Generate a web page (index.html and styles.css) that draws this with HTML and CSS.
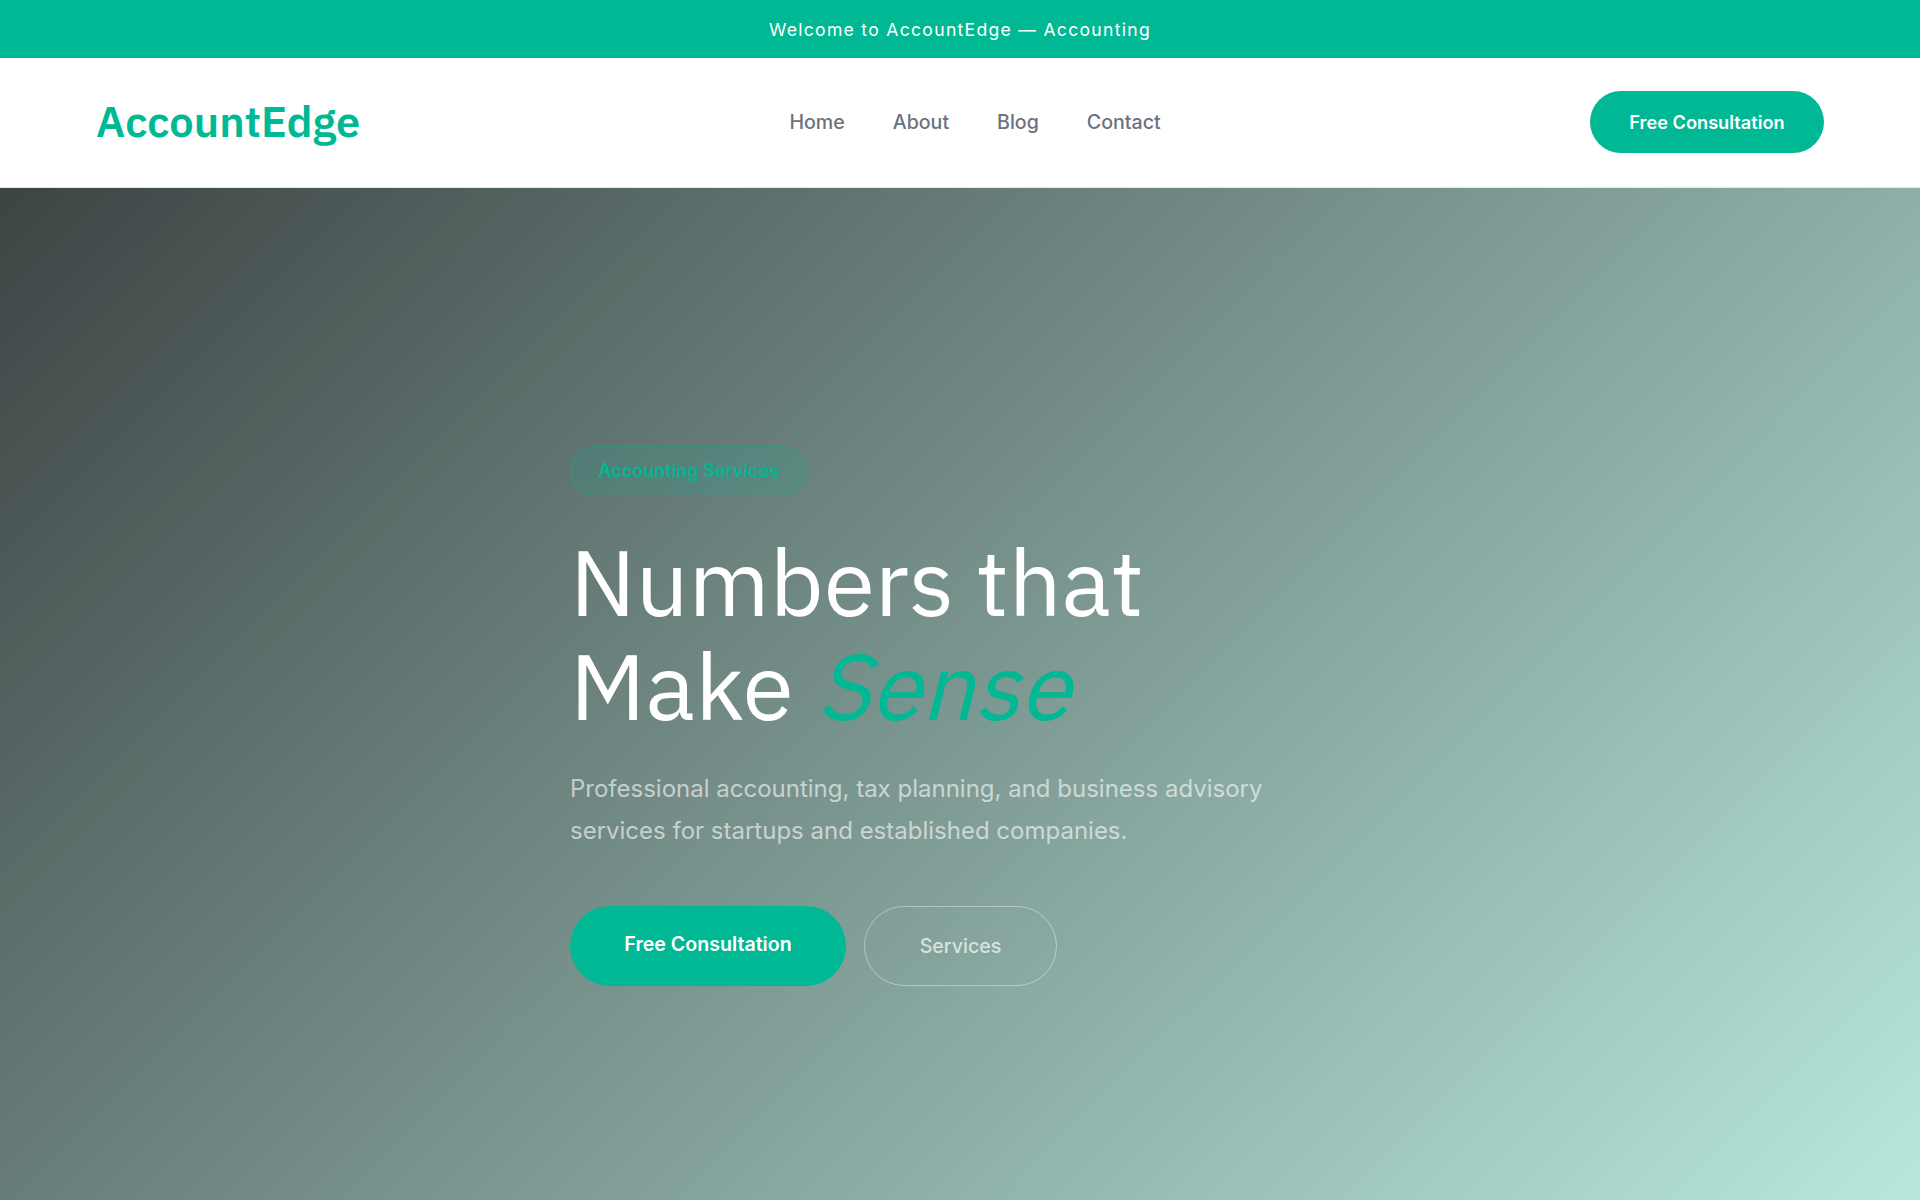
FILE: index.html
```html
<!DOCTYPE html>
<html lang="en">
<head>
<meta charset="utf-8">
<title>AccountEdge</title>
<link rel="stylesheet" href="styles.css">
</head>
<body>
<div class="topbar">Welcome to AccountEdge — Accounting</div>
<header class="nav">
  <a class="logo" href="#">AccountEdge</a>
  <nav class="links">
    <a href="#">Home</a>
    <a href="#">About</a>
    <a href="#">Blog</a>
    <a href="#">Contact</a>
  </nav>
  <a class="cta" href="#">Free Consultation</a>
</header>
<main class="hero">
  <div class="hero-inner">
    <span class="badge">Accounting Services</span>
    <h1>Numbers that<br>Make <em>Sense</em></h1>
    <p class="lead">Professional accounting, tax planning, and business advisory services for startups and established companies.</p>
    <div class="actions">
      <a class="btn primary" href="#">Free Consultation</a>
      <a class="btn ghost" href="#">Services</a>
    </div>
  </div>
</main>
</body>
</html>
```

FILE: styles.css
```css
* { box-sizing: border-box; margin: 0; padding: 0; }
html, body { height: 100%; }
body {
  font-family: Inter, "Liberation Sans", sans-serif;
  display: flex;
  flex-direction: column;
  min-height: 1200px;
  overflow: hidden;
  background: #fff;
}
a { text-decoration: none; color: inherit; }
.topbar {
  height: 58px;
  flex: none;
  background: #00b894;
  color: #fff;
  display: flex;
  align-items: center;
  justify-content: center;
  font-size: 17.6px;
  letter-spacing: 1.28px;
}
.nav {
  height: 130px;
  flex: none;
  display: flex;
  justify-content: space-between;
  align-items: center;
  padding: 0 96px 1px;
  background: #fff;
  border-bottom: 1px solid #e2e8e6;
}
.logo {
  font-family: "IBM Plex Sans", Roboto, Inter, sans-serif;
  font-weight: 600;
  font-size: 43.4px;
  color: #00b894;
  padding-bottom: 2px;
}
.links { display: flex; gap: 48px; padding-bottom: 1px; }
.links a { font-size: 19.6px; font-weight: 500; color: #6b7280; }
.cta {
  width: 234px;
  height: 62px;
  border-radius: 31px;
  background: #00b894;
  color: #fff;
  font-size: 18.2px;
  font-weight: 600;
  display: flex;
  align-items: center;
  justify-content: center;
}
.hero {
  flex: 1;
  background: linear-gradient(135deg, #3d4444 0%, #b8e8dc 100%);
  display: flex;
  justify-content: center;
  padding-top: 258px;
}
.hero-inner { width: 780px; }
.badge {
  display: inline-block;
  height: 50px;
  line-height: 48px;
  padding: 0 27.5px;
  border-radius: 25px;
  border: 1px solid rgba(0,184,148,.3);
  background: rgba(0,184,148,.15);
  color: #00b894;
  font-size: 18px;
  font-weight: 600;
}
h1 {
  margin-top: 34px;
  font-family: "IBM Plex Sans", Roboto, Inter, sans-serif;
  font-weight: 400;
  font-size: 93px;
  line-height: 104px;
  color: #fff;
}
h1 em {
  display: inline-block;
  color: #00b894;
  font-style: normal;
  transform: skewX(-14deg);
  transform-origin: 0 87px;
}
.lead {
  margin-top: 30px;
  max-width: 720px;
  font-size: 24px;
  line-height: 41.6px;
  color: rgba(255,255,255,.6);
}
.actions { margin-top: 55px; display: flex; gap: 18px; }
.btn {
  height: 80px;
  border-radius: 40px;
  display: flex;
  align-items: center;
  justify-content: center;
  font-size: 19.6px;
}
.primary {
  width: 276px;
  background: #00b894;
  color: #fff;
  font-weight: 600;
  padding-bottom: 4px;
}
.ghost {
  width: 193px;
  border: 1px solid rgba(255,255,255,.4);
  color: rgba(255,255,255,.7);
  font-weight: 500;
}
```
